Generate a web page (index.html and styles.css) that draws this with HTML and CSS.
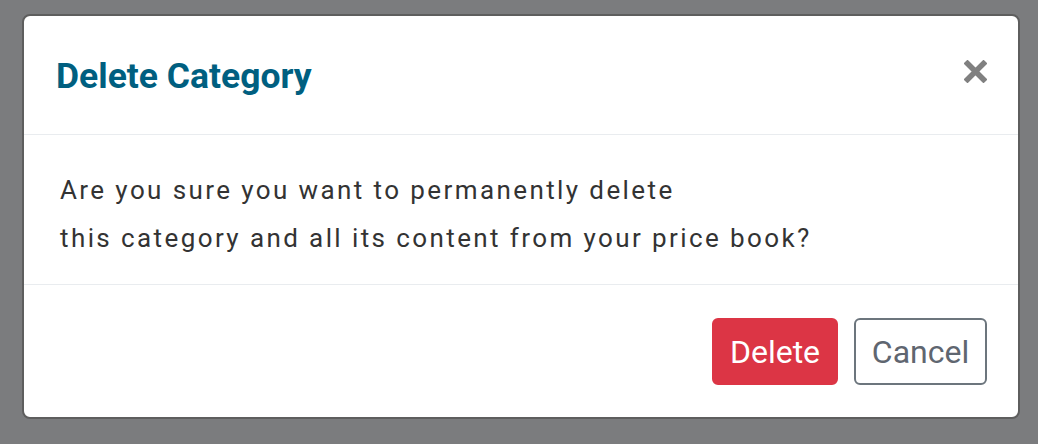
FILE: index.html
```html
<!DOCTYPE html>
<html>
<head>
<meta charset="utf-8">
<link rel="stylesheet" href="styles.css">
</head>
<body>
<div class="backdrop">
  <div class="modal">
    <div class="modal-header">
      <h2 class="modal-title">Delete Category</h2>
      <button class="close" aria-label="Close">
        <svg width="23" height="23" viewBox="0 0 23 23"><path d="M3.5 3.5 L19.5 19.5 M19.5 3.5 L3.5 19.5" stroke="#808080" stroke-width="5.5" stroke-linecap="square"/></svg>
      </button>
    </div>
    <div class="modal-body">
      <p>Are you sure you want to permanently delete<br>this category and all its content from your price book?</p>
    </div>
    <div class="modal-footer">
      <button class="btn btn-danger">Delete</button>
      <button class="btn btn-outline">Cancel</button>
    </div>
  </div>
</div>
</body>
</html>
```
FILE: styles.css
```css
html, body {
  margin: 0;
  padding: 0;
  background: #7b7c7e;
  font-family: Roboto, "Liberation Sans", sans-serif;
}
.backdrop {
  padding: 14px 18px 0 22px;
}
.modal {
  background: #fff;
  border: 2px solid #5e5e5e;
  border-radius: 8px;
  height: 405px;
  box-sizing: border-box;
  display: flex;
  flex-direction: column;
}
.modal-header {
  display: flex;
  justify-content: space-between;
  align-items: flex-start;
  padding: 39px 31px 0 32px;
  height: 119px;
  box-sizing: border-box;
  border-bottom: 1px solid #e9ecef;
}
.modal-title {
  margin: 0;
  font-size: 35.5px;
  line-height: 42px;
  font-weight: 700;
  color: #005f80;
}
.close {
  background: none;
  border: 0;
  padding: 0;
  margin-top: 5px;
  width: 23px;
  height: 23px;
  display: flex;
}
.modal-body {
  height: 150px;
  box-sizing: border-box;
  padding: 31px 36px 0 36px;
  border-bottom: 1px solid #e9ecef;
}
.modal-body p {
  margin: 0;
  font-size: 26px;
  line-height: 48px;
  letter-spacing: 2.4px;
  color: #333333;
}
.modal-footer {
  flex: 1;
  display: flex;
  justify-content: flex-end;
  align-items: flex-start;
  gap: 16px;
  padding: 33px 31px 0 0;
}
.btn {
  font-family: Roboto, "Liberation Sans", sans-serif;
  font-size: 32px;
  height: 67px;
  box-sizing: border-box;
  border-radius: 6px;
  padding: 0;
  cursor: pointer;
}
.btn-danger {
  background: #dc3545;
  border: 2px solid #dc3545;
  color: #fff;
  width: 126px;
}
.btn-outline {
  background: #fff;
  border: 2px solid #6c757d;
  color: #5f6670;
  width: 133px;
}
```
